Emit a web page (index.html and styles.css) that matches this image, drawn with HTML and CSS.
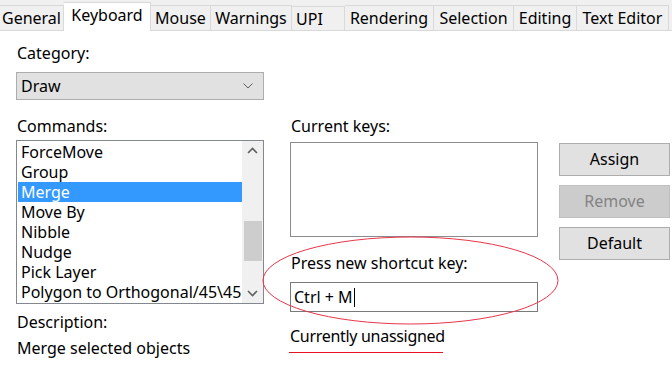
FILE: index.html
```html
<!DOCTYPE html>
<html>
<head>
<meta charset="utf-8">
<link rel="stylesheet" href="styles.css">
</head>
<body>
<div class="tabs">
  <div class="tab t-general">General</div>
  <div class="tab t-keyboard active">Keyboard</div>
  <div class="tab t-mouse">Mouse</div>
  <div class="tab t-warnings">Warnings</div>
  <div class="tab t-upi">UPI</div>
  <div class="tab t-rendering">Rendering</div>
  <div class="tab t-selection">Selection</div>
  <div class="tab t-editing">Editing</div>
  <div class="tab t-texteditor">Text Editor</div>
</div>
<div class="page">
  <div class="left">
    <div class="label">Category:</div>
    <div class="combo"><span>Draw</span>
      <svg class="chev" width="10" height="6" viewBox="0 0 10 6"><path d="M0.5 0.5 L5 5 L9.5 0.5" fill="none" stroke="#606060" stroke-width="1"/></svg>
    </div>
    <div class="label l2">Commands:</div>
    <div class="list">
      <div class="items">
        <div class="item">ForceMove</div>
        <div class="item">Group</div>
        <div class="item sel">Merge</div>
        <div class="item">Move By</div>
        <div class="item">Nibble</div>
        <div class="item">Nudge</div>
        <div class="item">Pick Layer</div>
        <div class="item">Polygon to Orthogonal/45\45</div>
      </div>
      <div class="scroll">
        <svg class="arr" width="21" height="20" viewBox="0 0 21 20"><path d="M6 12 L10.5 7.5 L15 12" fill="none" stroke="#606060" stroke-width="1.6"/></svg>
        <div class="track"><div class="thumb"></div></div>
        <svg class="arr" width="21" height="20" viewBox="0 0 21 20"><path d="M6 8 L10.5 12.5 L15 8" fill="none" stroke="#606060" stroke-width="1.6"/></svg>
      </div>
    </div>
    <div class="label l3">Description:</div>
    <div class="desc">Merge selected objects</div>
  </div>
  <div class="mid">
    <div class="label">Current keys:</div>
    <div class="keys"></div>
    <div class="label l4">Press new shortcut key:</div>
    <div class="input">Ctrl + M<span class="caret"></span></div>
    <div class="status">Currently unassigned</div>
    <div class="uline"></div>
  </div>
  <div class="buttons">
    <div class="btn">Assign</div>
    <div class="btn dis">Remove</div>
    <div class="btn">Default</div>
  </div>
  <svg class="ellipse" width="672" height="366" viewBox="0 0 672 366"><ellipse cx="410.5" cy="280.5" rx="147.5" ry="43.5" fill="none" stroke="#e8364a" stroke-width="1"/></svg>
</div>
</body>
</html>
```
FILE: styles.css
```css
html, body { margin: 0; padding: 0; }
body {
  width: 672px; height: 366px; overflow: hidden;
  background: #fff;
  font-family: "Noto Sans", "Liberation Sans", sans-serif;
  font-size: 16px; color: #000;
}
.tabs {
  display: flex; align-items: flex-end;
  height: 30px; background: #f0f0f0;
  border-bottom: 1px solid #d9d9d9;
}
.tab {
  height: 24px; line-height: 24px;
  background: #f0f0f0;
  border-top: 1px solid #d9d9d9; border-right: 1px solid #d9d9d9;
  text-align: center;
  white-space: nowrap;
  overflow: hidden;
}
.t-general { width: 63px; }
.t-keyboard { width: 86px; }
.t-mouse { width: 59px; }
.t-warnings { width: 80px; }
.t-upi { text-align: left; padding-left: 4px; box-sizing: border-box; width: 53px; }
.t-rendering { width: 88px; }
.t-selection { width: 79px; }
.t-editing { width: 62px; }
.t-texteditor { width: 91px; }
.tab.active {
  background: #fff; line-height: 25px;
  margin-bottom: -1px; height: 28px;
}
.page { position: relative; display: flex; padding: 12px 0 0 16px; }
.left { width: 248px; display: flex; flex-direction: column; }
.label { line-height: 20px; padding-left: 1px; white-space: nowrap; }
.combo {
  margin-top: 9px; height: 26px; border: 1px solid #adadad; background: #e1e1e1;
  display: flex; align-items: center; justify-content: space-between; padding: 0 10px 0 4px;
}
.l2 { margin-top: 16px; }
.list {
  margin-top: 4px; height: 162px; border: 1px solid #828790; display: flex; overflow: hidden;
}
.items { flex: 1; padding: 1px 0 0 1px; overflow: hidden; min-width: 0; }
.item { height: 20px; line-height: 20px; padding-left: 3px; white-space: nowrap; }
.item.sel { background: #3399ff; color: #fff; }
.scroll { width: 21px; flex: none; background: #f0f0f0; display: flex; flex-direction: column; }
.arr { display: block; }
.track { flex: 1; padding-top: 60px; }
.thumb { height: 40px; margin: 0 1px 0 2px; background: #cdcdcd; }
.l3 { margin-top: 8px; }
.desc { margin-top: 6px; line-height: 20px; padding-left: 1px; white-space: nowrap; }
.mid { width: 248px; margin-left: 26px; padding-top: 73px; display: flex; flex-direction: column; }
.keys { margin-top: 6px; height: 93px; border: 1px solid #8c8c8c; }
.l4 { margin-top: 16px; }
.input {
  margin-top: 9px; height: 28px; border: 1px solid #7a7a7a; padding-left: 3px;
  display: flex; align-items: center; white-space: pre;
}
.caret { display: inline-block; width: 1px; height: 19px; background: #000; margin-left: 1px; }
.status { margin-top: 14px; line-height: 20px; white-space: nowrap; letter-spacing: -0.3px; }
.uline { margin-top: 6px; width: 154px; height: 1px; background: #e81123; margin-left: -1px; }
.buttons { margin-left: 21px; padding-top: 100px; display: flex; flex-direction: column; gap: 9px; }
.btn {
  width: 109px; height: 31px; line-height: 31px; text-align: center;
  border: 1px solid #adadad; background: #e1e1e1;
}
.btn.dis { background: #cccccc; border-color: #bfbfbf; color: #838383; }
.ellipse { position: absolute; left: 0; top: -31px; pointer-events: none; }
```
